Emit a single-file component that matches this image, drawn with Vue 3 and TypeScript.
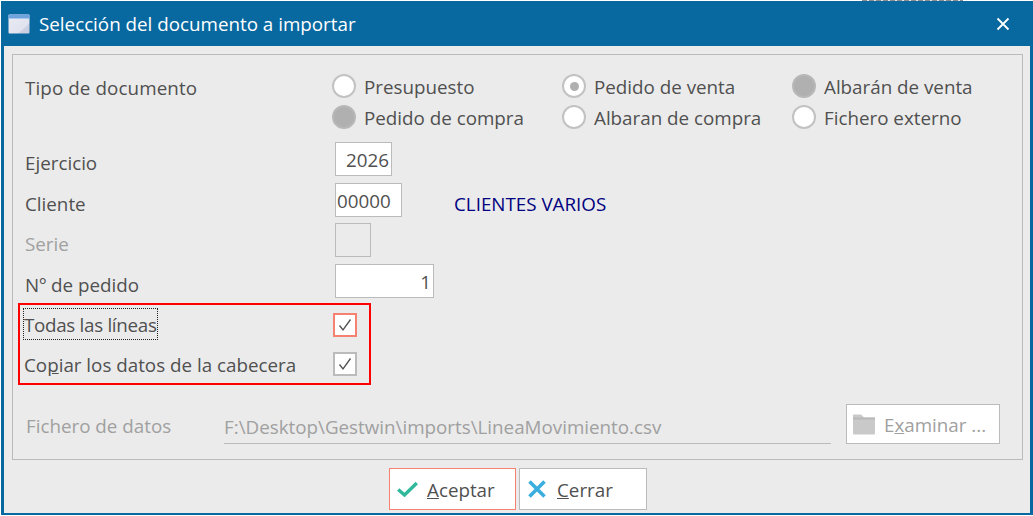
<script setup lang="ts">
interface DocOption {
  label: string
  state: 'free' | 'selected' | 'disabled'
}

const docOptions: DocOption[] = [
  { label: 'Presupuesto', state: 'free' },
  { label: 'Pedido de venta', state: 'selected' },
  { label: 'Albarán de venta', state: 'disabled' },
  { label: 'Pedido de compra', state: 'disabled' },
  { label: 'Albaran de compra', state: 'free' },
  { label: 'Fichero externo', state: 'free' }
]
</script>

<template>
  <div class="window">
    <div class="topline"><span class="topline__behind"></span></div>
    <header class="titlebar">
      <svg class="app-icon" width="22" height="20" viewBox="0 0 22 20">
        <defs>
          <linearGradient id="winBody" x1="0" y1="0" x2="1" y2="1">
            <stop offset="0" stop-color="#e9ebf3" />
            <stop offset="0.72" stop-color="#e0e3ee" />
            <stop offset="0.74" stop-color="#cdd2e3" />
            <stop offset="1" stop-color="#c4cadf" />
          </linearGradient>
        </defs>
        <rect x="0.5" y="0.5" width="21" height="19" rx="1" fill="url(#winBody)" />
        <rect x="0.5" y="0.5" width="21" height="4" rx="0.8" fill="#6fa3de" />
      </svg>
      <span class="title">Selección del documento a importar</span>
      <svg class="close" width="14" height="14" viewBox="0 0 14 14">
        <path d="M1.5 1.5 12.5 12.5M12.5 1.5 1.5 12.5" stroke="#fff" stroke-width="1.8" fill="none" />
      </svg>
    </header>

    <div class="body">
      <section class="panel">
        <div class="row doc-type">
          <span class="label">Tipo de documento</span>
          <div class="radios">
            <div v-for="opt in docOptions" :key="opt.label" class="radio-item">
              <span class="radio" :class="`radio--${opt.state}`"></span>
              <span class="radio-text">{{ opt.label }}</span>
            </div>
          </div>
        </div>

        <div class="row row--year">
          <span class="label">Ejercicio</span>
          <div class="field field--year">2026</div>
        </div>

        <div class="row row--client">
          <span class="label">Cliente</span>
          <div class="field field--client">00000</div>
          <span class="client-name">CLIENTES VARIOS</span>
        </div>

        <div class="row row--serie">
          <span class="label label--off">Serie</span>
          <div class="field field--serie"></div>
        </div>

        <div class="row row--order">
          <span class="label">Nº de pedido</span>
          <div class="field field--order">1</div>
        </div>

        <div class="highlight">
          <div class="check-row check-row--first">
            <span class="check-label check-label--focus">Todas las líneas</span>
            <span class="checkbox checkbox--hot">
              <svg width="14" height="14" viewBox="0 0 14 14"><path d="M1.5 7.5 5 12 12.5 1.5" stroke="#505050" stroke-width="1.3" fill="none" /></svg>
            </span>
          </div>
          <div class="check-row">
            <span class="check-label">Co<u>p</u>iar los datos de la cabecera</span>
            <span class="checkbox">
              <svg width="14" height="14" viewBox="0 0 14 14"><path d="M1.5 7.5 5 12 12.5 1.5" stroke="#505050" stroke-width="1.3" fill="none" /></svg>
            </span>
          </div>
        </div>

        <div class="file-row">
          <span class="file-label">Fichero de datos</span>
          <div class="file-path">F:\Desktop\Gestwin\imports\LineaMovimiento.csv</div>
          <button class="browse">
            <svg width="22" height="22" viewBox="0 0 22 22">
              <path d="M0 2.5a1 1 0 0 1 1-1h7l3 3h10a1 1 0 0 1 1 1v15a1 1 0 0 1-1 1H1a1 1 0 0 1-1-1z" fill="#c9c9c9" />
              <path d="M0 4.5h22v2H0z" fill="#b9b9b9" />
            </svg>
            <span class="btn-text">E<u>x</u>aminar ...</span>
          </button>
        </div>
      </section>

      <footer class="actions">
        <button class="btn btn--hot">
          <svg width="21" height="16" viewBox="0 0 21 16"><path d="M1.2 8.5 7.5 14 19.8 2" stroke="#2fb99a" stroke-width="3.4" fill="none" /></svg>
          <span class="btn-text"><u>A</u>ceptar</span>
        </button>
        <button class="btn">
          <svg width="20" height="18" viewBox="0 0 20 18"><path d="M1.5 1.5 16.5 16.5M16.5 1.5 1.5 16.5" stroke="#3aaede" stroke-width="3.6" fill="none" /></svg>
          <span class="btn-text"><u>C</u>errar</span>
        </button>
      </footer>
    </div>
  </div>
</template>

<style>
html, body {
  margin: 0;
  background: #fff;
}
</style>

<style scoped>
.window {
  width: 1033px;
  height: 516px;
  box-sizing: border-box;
  padding: 0 0 1px 1px;
  display: flex;
  flex-direction: column;
  font-family: "Open Sans", "Noto Sans", sans-serif;
  font-size: 18.8px;
  color: #505050;
  overflow: hidden;
}

.topline {
  height: 1px;
  background: #fff;
}

.topline__behind {
  display: block;
  width: 101px;
  height: 1px;
  margin-left: 861px;
  background: repeating-linear-gradient(90deg, #8c8c8c 0 5px, #e4e4e4 5px 7px);
}

.titlebar {
  height: 45px;
  flex-shrink: 0;
  background: #0868a0;
  display: flex;
  align-items: center;
  padding: 0 23px 0 7px;
  color: #fff;
}

.app-icon {
  margin-right: 9px;
}

.title {
  flex: 1;
}

.body {
  flex: 1;
  display: flex;
  flex-direction: column;
  background: #ebebeb;
  border: 3px solid #0868a0;
  border-top: 0;
  border-bottom-width: 2px;
  padding: 8px 7px 0 8px;
}

.panel {
  height: 406px;
  box-sizing: border-box;
  border: 1px solid #bbb;
  padding: 0 0 0 12px;
}

.row {
  display: flex;
  align-items: center;
}

.label {
  width: 310px;
  flex-shrink: 0;
  padding-top: 8px;
}

.label--off {
  color: #a0a0a0;
}

.doc-type {
  align-items: flex-start;
  padding-top: 19px;
  height: 87px;
  box-sizing: border-box;
}

.doc-type .label {
  width: 307px;
  padding-top: 0;
  line-height: 28px;
  letter-spacing: 0.1px;
}

.radios {
  display: grid;
  grid-template-columns: repeat(3, 230px);
  grid-auto-rows: 24px;
  row-gap: 7px;
}

.radio-item {
  display: flex;
  align-items: center;
  gap: 8px;
}

.radio-text {
  padding-top: 2px;
}

.radio {
  width: 24px;
  height: 24px;
  box-sizing: border-box;
  border-radius: 50%;
  border: 2px solid #c2c2c2;
  background: #fff;
  display: flex;
  align-items: center;
  justify-content: center;
}

.radio--selected::after {
  content: "";
  width: 9px;
  height: 9px;
  border-radius: 50%;
  background: #b0b0b0;
}

.radio--disabled {
  background: #b0b0b0;
  border-color: #b8b8b8;
}

.field {
  box-sizing: border-box;
  height: 34px;
  border: 1px solid #bbb;
  background: #fff;
  line-height: 34px;
}

.field--year {
  width: 57px;
  padding-left: 10px;
}

.field--client {
  width: 67px;
  padding-left: 1px;
}

.field--serie {
  width: 36px;
  background: transparent;
}

.field--order {
  width: 99px;
  text-align: right;
  padding-right: 2px;
}

.row--client,
.row--order {
  margin-top: 7px;
}

.row--serie {
  margin-top: 6px;
}

.client-name {
  margin-left: 52px;
  padding-top: 8px;
  color: #000080;
}

.highlight {
  margin: 5px 0 0 -7px;
  width: 353px;
  height: 82px;
  box-sizing: border-box;
  border: 2px solid #f00;
  padding: 4px 0 0 4px;
}

.check-row {
  display: flex;
  align-items: center;
  height: 30px;
  width: 333px;
  justify-content: space-between;
  margin-top: 10px;
}

.check-row--first {
  margin-top: 0;
}

.check-row--first .checkbox {
  margin-top: 2px;
}

.check-label {
  padding-top: 2px;
}

.check-label--focus {
  padding-top: 2px;
  outline: 1px dotted #222;
  line-height: 28px;
  letter-spacing: -0.3px;
}

.checkbox {
  width: 24px;
  height: 24px;
  box-sizing: border-box;
  border: 2px solid #bbb;
  background: #fff;
  display: flex;
  align-items: center;
  justify-content: center;
}

.checkbox--hot {
  border-color: #f58270;
}

.file-row {
  margin-top: 19px;
  height: 40px;
  display: flex;
  align-items: center;
  color: #a0a0a0;
}

.file-label {
  width: 198px;
  margin-left: 1px;
  flex-shrink: 0;
  padding-top: 3px;
}

.file-path {
  width: 607px;
  height: 40px;
  box-sizing: border-box;
  border-bottom: 1px solid #bbb;
  line-height: 46px;
  white-space: nowrap;
  margin-right: 15px;
}

.browse {
  width: 154px;
  height: 40px;
  box-sizing: border-box;
  border: 1px solid #bbb;
  background: #fff;
  color: #a0a0a0;
  font: inherit;
  padding: 0 0 0 6px;
  display: flex;
  align-items: center;
  gap: 9px;
}

.btn-text {
  padding-top: 2px;
  white-space: nowrap;
}

.actions {
  display: flex;
  gap: 3px;
  margin: 8px 0 0 377px;
}

.btn {
  width: 128px;
  height: 42px;
  box-sizing: border-box;
  border: 1px solid #bbb;
  background: #fff;
  color: #505050;
  font: inherit;
  padding: 0 0 0 8px;
  display: flex;
  align-items: center;
  gap: 9px;
}

.btn--hot {
  width: 127px;
  padding-left: 7px;
  border-color: #f58270;
}
</style>
